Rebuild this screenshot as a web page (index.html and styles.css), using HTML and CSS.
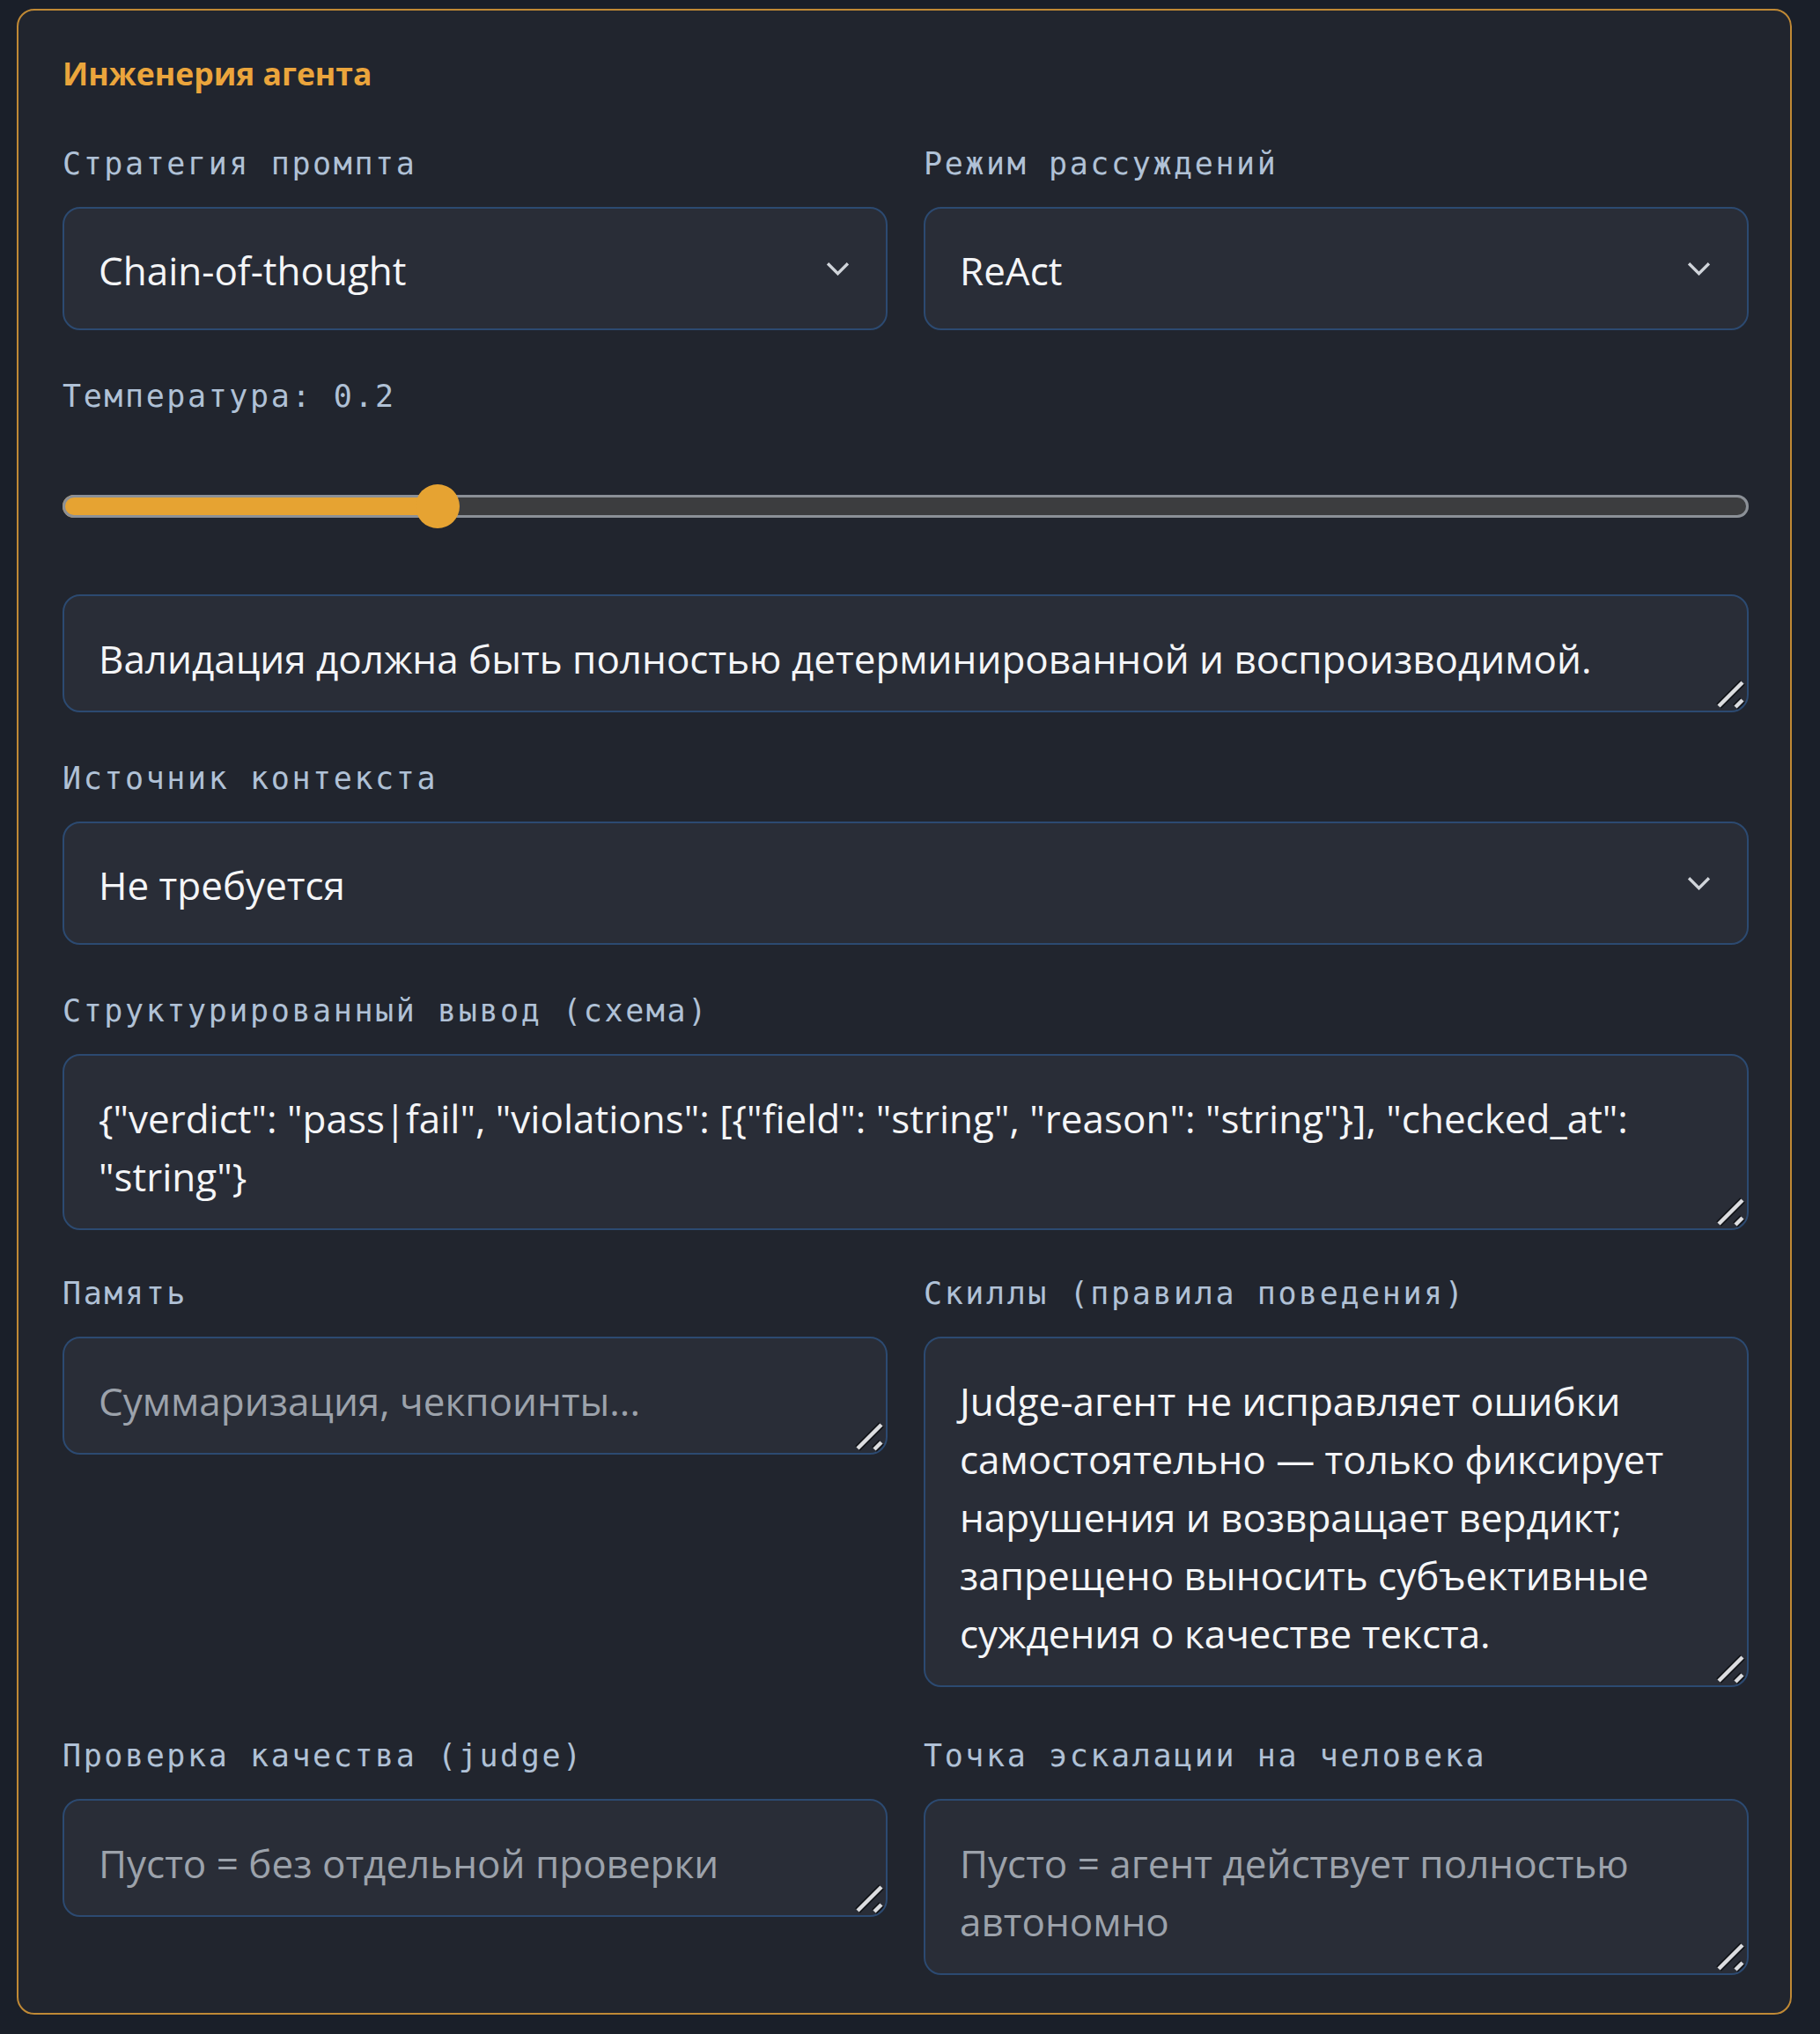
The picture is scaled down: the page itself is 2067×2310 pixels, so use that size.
FILE: index.html
```html
<!DOCTYPE html>
<html lang="ru">
<head>
  <meta charset="UTF-8" />
  <meta name="viewport" content="width=device-width, initial-scale=1.0" />
  <title>Инженерия агента</title>
  <link rel="stylesheet" href="styles.css">
</head>
<body>
  <section class="panel">
    <h3 class="panel-title">Инженерия агента</h3>

    <div class="row">
      <div class="field">
        <label for="strategy">Стратегия промпта</label>
        <div class="select-wrap">
          <select id="strategy">
            <option>Chain-of-thought</option>
            <option>Zero-shot</option>
            <option>Few-shot</option>
          </select>
          <svg class="chevron" viewBox="0 0 26 15"><path d="M2 2l11 11 11-11" /></svg>
        </div>
      </div>
      <div class="field">
        <label for="reasoning">Режим рассуждений</label>
        <div class="select-wrap">
          <select id="reasoning">
            <option>ReAct</option>
            <option>Plan-and-execute</option>
            <option>Reflexion</option>
          </select>
          <svg class="chevron" viewBox="0 0 26 15"><path d="M2 2l11 11 11-11" /></svg>
        </div>
      </div>
    </div>

    <div class="field">
      <label for="temperature">Температура: <span id="tempValue">0.2</span></label>
      <input type="range" id="temperature" class="slider" min="0" max="0.93" step="0.01" value="0.2" style="--fill: 22%">
    </div>

    <div class="area">
      <textarea id="goal" rows="1">Валидация должна быть полностью детерминированной и воспроизводимой.</textarea>
      <svg class="grip" viewBox="0 0 40 40"><path class="grip-edge" d="M6 33L33 6M25 34l8-8" /><path d="M6 33L33 6M25 34l8-8" /></svg>
    </div>

    <div class="field">
      <label for="context">Источник контекста</label>
      <div class="select-wrap">
        <select id="context">
          <option>Не требуется</option>
          <option>RAG по базе знаний</option>
          <option>Файлы проекта</option>
        </select>
        <svg class="chevron" viewBox="0 0 26 15"><path d="M2 2l11 11 11-11" /></svg>
      </div>
    </div>

    <div class="field">
      <label for="schema">Структурированный вывод (схема)</label>
      <div class="area">
        <textarea id="schema" rows="2">{"verdict": "pass|fail", "violations": [{"field": "string", "reason": "string"}], "checked_at": "string"}</textarea>
        <svg class="grip" viewBox="0 0 40 40"><path class="grip-edge" d="M6 33L33 6M25 34l8-8" /><path d="M6 33L33 6M25 34l8-8" /></svg>
      </div>
    </div>

    <div class="row row-tight">
      <div class="field">
        <label for="memory">Память</label>
        <div class="area">
          <textarea id="memory" rows="1" placeholder="Суммаризация, чекпоинты..."></textarea>
          <svg class="grip" viewBox="0 0 40 40"><path class="grip-edge" d="M6 33L33 6M25 34l8-8" /><path d="M6 33L33 6M25 34l8-8" /></svg>
        </div>
      </div>
      <div class="field">
        <label for="skills">Скиллы (правила поведения)</label>
        <div class="area">
          <textarea id="skills" rows="5">Judge-агент не исправляет ошибки самостоятельно — только фиксирует нарушения и возвращает вердикт; запрещено выносить субъективные суждения о качестве текста.</textarea>
          <svg class="grip" viewBox="0 0 40 40"><path class="grip-edge" d="M6 33L33 6M25 34l8-8" /><path d="M6 33L33 6M25 34l8-8" /></svg>
        </div>
      </div>
    </div>

    <div class="row row-loose">
      <div class="field">
        <label for="judge">Проверка качества (judge)</label>
        <div class="area">
          <textarea id="judge" rows="1" placeholder="Пусто = без отдельной проверки"></textarea>
          <svg class="grip" viewBox="0 0 40 40"><path class="grip-edge" d="M6 33L33 6M25 34l8-8" /><path d="M6 33L33 6M25 34l8-8" /></svg>
        </div>
      </div>
      <div class="field">
        <label for="escalation">Точка эскалации на человека</label>
        <div class="area">
          <textarea id="escalation" rows="2" placeholder="Пусто = агент действует полностью автономно"></textarea>
          <svg class="grip" viewBox="0 0 40 40"><path class="grip-edge" d="M6 33L33 6M25 34l8-8" /><path d="M6 33L33 6M25 34l8-8" /></svg>
        </div>
      </div>
    </div>
  </section>

  <script>
    const temp = document.getElementById("temperature");
    temp.addEventListener("input", function () {
      const pct = (this.value - this.min) / (this.max - this.min);
      document.getElementById("tempValue").textContent = Number(this.value).toFixed(1);
      this.style.setProperty("--fill", (1.3 + pct * 97.4) + "%");
    });
  </script>
</body>
</html>
```

FILE: styles.css
```css
body {
  margin: 0;
  padding: 10px 32px 22px 19px;
  background: #1a1f29;
  font-family: "Open Sans", "Noto Sans", sans-serif;
  color: #eef0f3;
}
.panel {
  display: flex;
  flex-direction: column;
  gap: 55px;
  background: #21252e;
  border: 2px solid #c08935;
  border-radius: 20px;
  padding: 53px 47px 43px 50px;
}
.panel-title {
  margin: 0 0 9px;
  font-size: 35.5px;
  line-height: 37px;
  font-weight: 700;
  color: #eba53c;
}
.row {
  display: grid;
  grid-template-columns: 1fr 1fr;
  column-gap: 41px;
  align-items: start;
}
.row-tight {
  margin-top: -3px;
}
.row-loose {
  margin-top: 3px;
}
.field {
  display: flex;
  flex-direction: column;
  gap: 29px;
}
label {
  font-family: "DejaVu Sans Mono", monospace;
  font-size: 35px;
  line-height: 40px;
  letter-spacing: 2.6px;
  color: #b0c1d6;
}
.select-wrap,
.area {
  position: relative;
}
select {
  appearance: none;
  -webkit-appearance: none;
  width: 100%;
  height: 140px;
  padding: 3px 80px 0 39px;
  background: #292d37;
  border: 2px solid #2c4a71;
  border-radius: 20px;
  font-family: inherit;
  font-size: 44px;
  font-weight: 500;
  color: #f4f5f7;
  outline: none;
}
.chevron {
  position: absolute;
  right: 43px;
  top: 62px;
  width: 27px;
  height: 16px;
  fill: none;
  stroke: #d0d4da;
  stroke-width: 3.2;
  pointer-events: none;
}
textarea {
  display: block;
  width: 100%;
  box-sizing: border-box;
  padding: 38px 39px 26px;
  background: #292d37;
  border: 2px solid #2c4a71;
  border-radius: 20px;
  font-family: inherit;
  font-size: 44px;
  font-weight: 500;
  line-height: 66px;
  color: #f4f5f7;
  resize: none;
  outline: none;
}
textarea::placeholder {
  color: #9ca2ab;
}
/* resize grip drawn in the bottom-right corner */
.grip {
  position: absolute;
  right: 0;
  bottom: 0;
  width: 40px;
  height: 40px;
  fill: none;
  stroke: #dcdde0;
  stroke-width: 4.5;
  pointer-events: none;
}
.grip .grip-edge {
  stroke: #121419;
  stroke-width: 8;
}
.slider {
  -webkit-appearance: none;
  appearance: none;
  width: 100%;
  height: 50px;
  margin: 51px 0 20px;
  background: transparent;
}
.slider::-webkit-slider-runnable-track {
  height: 26px;
  border-radius: 13px;
  background: linear-gradient(to right, #e6a332 var(--fill), #3c3d3f var(--fill));
  box-shadow: inset 0 0 0 3px #8b9097;
}
.slider::-webkit-slider-thumb {
  -webkit-appearance: none;
  width: 50px;
  height: 50px;
  margin-top: -12px;
  border-radius: 50%;
  background: #e6a332;
  border: none;
}
```
